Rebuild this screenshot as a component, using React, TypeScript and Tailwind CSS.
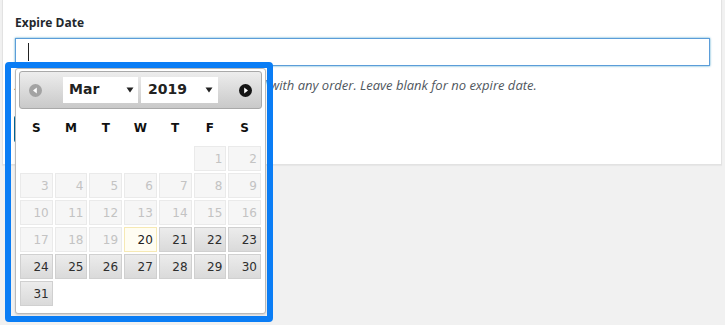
import React from 'react';

const DAY_NAMES = ['S', 'M', 'T', 'W', 'T', 'F', 'S'];

// March 2019 starts on a Friday
const cells: (number | null)[] = [
  ...Array(5).fill(null),
  ...Array.from({ length: 31 }, (_, i) => i + 1),
];

function Arrow() {
  return (
    <svg width="8" height="6" viewBox="0 0 8 6" className="shrink-0">
      <path d="M0.5 0.5 L7.5 0.5 L4 5.5 Z" fill="#222" />
    </svg>
  );
}

function NavIcon({ dir, disabled }: { dir: 'prev' | 'next'; disabled?: boolean }) {
  return (
    <svg width="13" height="13" viewBox="0 0 13 13">
      <circle cx="6.5" cy="6.5" r="6.5" fill={disabled ? '#a3a3a3' : '#151515'} />
      {dir === 'prev' ? (
        <path d="M4 6.5 L7.8 3.6 L7.8 9.4 Z" fill="#fff" />
      ) : (
        <path d="M9 6.5 L5.2 3.6 L5.2 9.4 Z" fill="#fff" />
      )}
    </svg>
  );
}

function DayCell({ day }: { day: number | null }) {
  if (day === null) return <div className="h-[25px]" />;
  const base =
    'h-[25px] flex items-center justify-end pr-[3px] border text-[12px] leading-none';
  if (day < 20) {
    return (
      <div className={`${base} bg-[#f6f6f6] border-[#eaeaea] text-[#c3c3c3]`}>{day}</div>
    );
  }
  if (day === 20) {
    return (
      <div className={`${base} bg-[#fffdf2] border-[#f6e9b4] text-[#222]`}>{day}</div>
    );
  }
  return (
    <div
      className={`${base} bg-gradient-to-b from-[#ececec] to-[#dadada] border-[#d0d0d0] text-[#2e2e2e]`}
    >
      {day}
    </div>
  );
}

function Datepicker() {
  return (
    <div
      className="w-[251px] h-[246px] ml-[4px] bg-white border border-[#b9b9b9] rounded-[3px] px-[3px] pt-[2px] shadow-[0_1px_2px_rgba(0,0,0,0.15)]"
      style={{ fontFamily: '"DejaVu Sans", Verdana, sans-serif' }}
    >
      <div className="h-[38px] flex items-center justify-between px-[9px] rounded-[3px] border border-[#a9a9a9] bg-gradient-to-b from-[#ededed] to-[#c9c9c9]">
        <NavIcon dir="prev" disabled />
        <div className="flex gap-[3px] -mt-[1px]">
          <div className="w-[75px] h-[26px] bg-white flex items-center justify-between pl-[6px] pr-[4px] text-[14px] font-bold text-[#222]">
            <span>Mar</span>
            <Arrow />
          </div>
          <div className="w-[77px] h-[26px] bg-white flex items-center justify-between pl-[7px] pr-[5px] text-[14px] font-bold text-[#222]">
            <span>2019</span>
            <Arrow />
          </div>
        </div>
        <NavIcon dir="next" />
      </div>
      <div className="px-[1px]">
        <div className="grid grid-cols-7 gap-x-[2px] h-[37px] items-center">
          {DAY_NAMES.map((d, i) => (
            <div key={i} className="text-center text-[12px] font-bold text-[#111]">
              {d}
            </div>
          ))}
        </div>
        <div className="grid grid-cols-7 gap-[2px]">
          {cells.map((d, i) => (
            <DayCell key={i} day={d} />
          ))}
        </div>
      </div>
    </div>
  );
}

export default function App() {
  return (
    <div className="relative w-[725px] h-[325px] overflow-hidden bg-[#f1f1f1]">
      <div
        className="ml-[2px] w-[720px] h-[165px] bg-white border-x border-b border-[#e2e2e2] shadow-[0_1px_1px_rgba(0,0,0,0.04)] pl-[12px] pt-[15px]"
        style={{ fontFamily: '"Open Sans", "Liberation Sans", sans-serif' }}
      >
        <div className="text-[12px] leading-[16px] font-bold text-[#23282d]">Expire Date</div>
        <div className="mt-[7px] w-[695px] h-[28px] border border-[#5b9dd9] shadow-[0_0_2px_rgba(30,140,190,0.8)] bg-white flex items-center pl-[12px]">
          <div className="w-px h-[18px] bg-[#222]" />
        </div>
        <p className="mt-[9px] text-[13px] leading-[20px] italic text-[#50575e]">
          After this date, the coupons can not be used with any order. Leave blank for no expire date.
        </p>
        <div className="mt-[20px] -ml-[1px] w-[90px] h-[28px] rounded-[3px] bg-[#0085ba] border border-[#006799]" />
      </div>

      <div className="absolute left-[5px] top-[62px] w-[268px] h-[260px] border-[6px] border-[#0a7df5] rounded-[4px]">
        <Datepicker />
      </div>
    </div>
  );
}
